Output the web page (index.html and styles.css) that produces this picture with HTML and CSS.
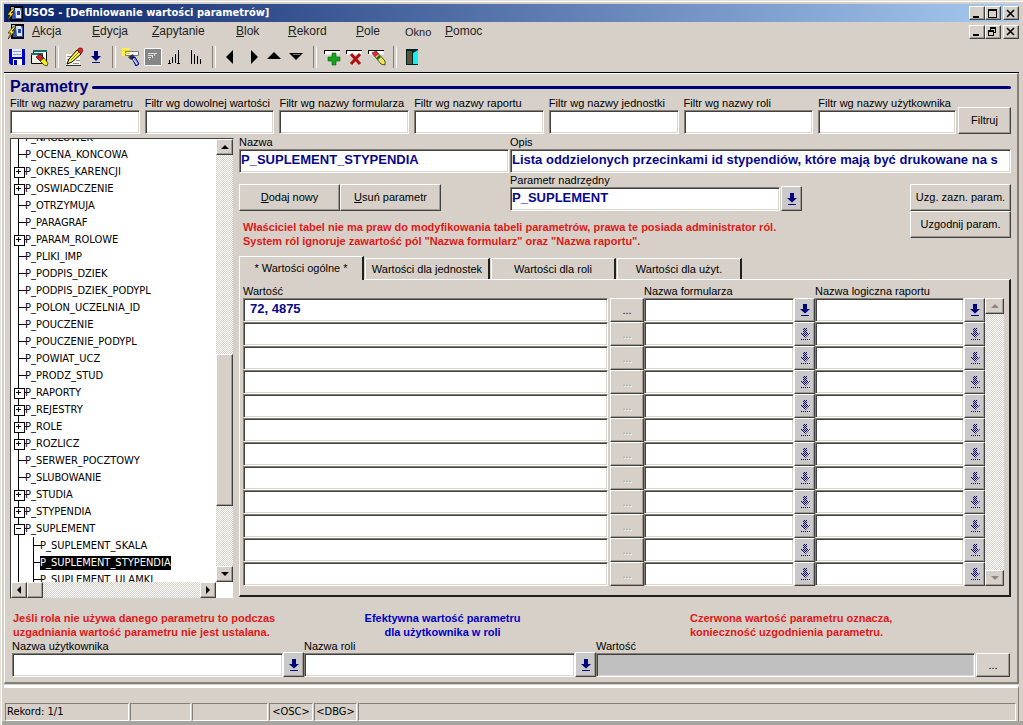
FILE: index.html
```html
<!DOCTYPE html>
<html lang="pl">
<head>
<meta charset="utf-8">
<title>USOS - [Definiowanie wartości parametrów]</title>
<link rel="stylesheet" href="styles.css">
</head>
<body>
<svg class="defs" aria-hidden="true">
  <defs>
    <pattern id="dither" width="2" height="2" patternUnits="userSpaceOnUse">
      <path d="M0 0h1v1H0zM1 1h1v1H1z" fill="#00007b"/>
    </pattern>
    <symbol id="lov" viewBox="0 0 10 12"><path d="M3 0h4v5h3L5 9.500 0 5h3zM1 11h8v1H1z" fill="#00007b"/></symbol>
    <symbol id="lov-off" viewBox="0 0 10 12"><path d="M3 0h4v5h3L5 10 0 5h3zM0 11h10v1H0z" fill="url(#dither)"/></symbol>
    <symbol id="app" viewBox="0 0 16 15">
      <path d="M3 0h13v15H3z" fill="#000"/><path d="M5 2h10v11H5z" fill="#2d4fb5"/>
      <path d="M8 2h5l1 3v7H9z" fill="#dfe8ff"/><path d="M10 5h3v4h-3z" fill="#2040c0"/>
      <path d="M4 1h3v3H4z" fill="#a9b7c9"/>
      <path d="M5 3L0 9h3l-3 6 7-8H4l4-4z" fill="#ffe600" stroke="#000" stroke-width=".6"/>
    </symbol>
    <symbol id="up" viewBox="0 0 8 4"><path d="M4 0l4 4H0z"/></symbol>
    <symbol id="down" viewBox="0 0 8 4"><path d="M0 0h8L4 4z"/></symbol>
    <symbol id="prev" viewBox="0 0 4 8"><path d="M4 0v8L0 4z"/></symbol>
    <symbol id="next" viewBox="0 0 4 8"><path d="M0 0v8l4-4z"/></symbol>
    <symbol id="min" viewBox="0 0 10 9"><path d="M1 7h6v2H1z"/></symbol>
    <symbol id="max" viewBox="0 0 10 9"><path d="M0 0h9v9H0zM1 2v6h7V2z" fill-rule="evenodd"/></symbol>
    <symbol id="restore" viewBox="0 0 10 9"><path d="M2 0h6v6H6V5h1V2H3v1H2zM0 3h6v6H0zM1 5v3h4V5z" fill-rule="evenodd"/></symbol>
    <symbol id="close" viewBox="0 0 10 9"><path d="M1 1l7 7M8 1L1 8" stroke="#000" stroke-width="1.600"/></symbol>
  </defs>
</svg>

<div class="window">
  <header>
    <div class="titlebar">
      <svg class="app-icon"><use href="#app"/></svg>
      <h1>USOS - [Definiowanie wartości parametrów]</h1>
      <div class="win-buttons">
        <button class="btn" aria-label="Minimalizuj"><svg><use href="#min"/></svg></button>
        <button class="btn" aria-label="Maksymalizuj"><svg><use href="#max"/></svg></button>
        <button class="btn close" aria-label="Zamknij"><svg><use href="#close"/></svg></button>
      </div>
    </div>
    <div class="menubar">
      <svg class="app-icon"><use href="#app"/></svg>
      <nav class="menu">
        <button><u>A</u>kcja</button>
        <button><u>E</u>dycja</button>
        <button><u>Z</u>apytanie</button>
        <button><u>B</u>lok</button>
        <button><u>R</u>ekord</button>
        <button><u>P</u>ole</button>
        <button class="small">Okno</button>
        <button><u>P</u>omoc</button>
      </nav>
      <div class="win-buttons">
        <button class="btn" aria-label="Minimalizuj okno"><svg><use href="#min"/></svg></button>
        <button class="btn" aria-label="Przywróć okno"><svg><use href="#restore"/></svg></button>
        <button class="btn close" aria-label="Zamknij okno"><svg><use href="#close"/></svg></button>
      </div>
    </div>
    <div class="toolbar">
      <button aria-label="Zapisz"><svg viewBox="0 0 20 20"><path d="M2 2h16v16H4l-2-2z" fill="#0000c0"/><path d="M5 2h10v8H5z" fill="#e8ecff"/><path d="M6 4h8v1H6zM6 7h8v1H6z" fill="#8c9be0"/><path d="M6 12h9v6H6z" fill="#fff"/><path d="M7 13h3v5H7z" fill="#0000c0"/></svg></button>
      <button aria-label="Wyczyść formularz"><svg viewBox="0 0 20 20"><path d="M4.500 3.500h13v11h-13z" fill="#fff" stroke="#000"/><path d="M4 3h14v2H4z" fill="#176b68"/><path d="M2.500 6.500h11v10h-11z" fill="#f3f1e8" stroke="#000"/><path d="M2 6h12v2H2z" fill="#176b68"/><path d="M7 10l4-3 4 4-4 3z" fill="#d32020" stroke="#000" stroke-width=".6"/><path d="M11 14l4-3 4 5-1 3-3-1z" fill="#f2ee20" stroke="#000" stroke-width=".6"/></svg></button>
      <span class="sep"></span>
      <button aria-label="Edytuj"><svg viewBox="0 0 20 20"><path d="M2 7h14v12H2z" fill="#f5f5f0"/><path d="M3 9.500h5M3 12.500h3M9 16.500h6M12 13.500h4" stroke="#8c8c8c"/><path d="M2 18h15v1H2z" fill="#333"/><path d="M5 12l8-9 4 4-9 8-5 2z" fill="#f6ed3a" stroke="#000"/><path d="M7 13l8-8" stroke="#7c8d18"/><path d="M13 3l2-2h3l1 3-2 3z" fill="#d8202c" stroke="#701010" stroke-width=".6"/></svg></button>
      <button aria-label="Lista wartości"><svg viewBox="0 0 20 20"><path d="M8 4h4v5h3l-5 5-5-5h3zM6 15h8v1H6z" fill="#00007b"/></svg></button>
      <span class="sep"></span>
      <button aria-label="Wprowadź zapytanie"><svg viewBox="0 0 20 20"><path d="M1 1h8v8H1z" fill="#fff04a"/><path d="M4.500 4.500h13v4h-13z" fill="#fff" stroke="#777"/><path d="M2 3.500h7M3 6.500h6" stroke="#f5d800"/><path d="M7 10l5-3 2 4-4 2z" fill="#333"/><path d="M11 11l3-1 4 7-3 2z" fill="#7d8ff0" stroke="#000080"/><path d="M12 12l4 5" stroke="#fff"/></svg></button>
      <button aria-label="Wykonaj zapytanie" disabled><svg viewBox="0 0 20 20"><path d="M1.500 1.500h17v17h-17z" fill="#868686" stroke="#fff"/><path d="M5 6h9v1H5zM5 8h5v1H5zM5 10h3v1H5zM11 7h1v2h-1zM9 9h1v2H9zM6 12h1v1H6z" fill="#ddd"/></svg></button>
      <button aria-label="Sortuj rosnąco"><svg viewBox="0 0 20 20"><path d="M4 13h1v3H4zM7 10h1v6H7zM10 7h1v9h-1zM13 3h1v13h-1zM3 16h3v1H3zM12 16h3v1h-3z"/></svg></button>
      <button aria-label="Sortuj malejąco"><svg viewBox="0 0 20 20"><path d="M4 3h1v14H4zM7 7h1v10H7zM10 9h1v8h-1zM13 12h1v5h-1z"/></svg></button>
      <span class="sep narrow"></span>
      <button aria-label="Poprzedni blok"><svg viewBox="0 0 20 20"><path d="M13 3v14L6 10z"/></svg></button>
      <button aria-label="Następny blok"><svg viewBox="0 0 20 20"><path d="M9 3v14l7-7z"/></svg></button>
      <button aria-label="Poprzedni rekord"><svg viewBox="0 0 20 20"><path d="M10 5l7 7H3z"/></svg></button>
      <button aria-label="Następny rekord"><svg viewBox="0 0 20 20"><path d="M3 6h14l-7 7z"/><path d="M7 7.500h7" stroke="#777"/></svg></button>
      <span class="sep wide"></span>
      <button aria-label="Wstaw rekord"><svg viewBox="0 0 20 20"><path d="M1.500 3.500h15v4h-15z" fill="#fff"/><path d="M1 3h16v1H1zM1 3h1v4H1z"/><path d="M9 6h4v4h4v4h-4v4H9v-4H5v-4h4z" fill="#16a41c" stroke="#0a5a10" stroke-width=".6"/></svg></button>
      <button aria-label="Usuń rekord"><svg viewBox="0 0 20 20"><path d="M1.500 3.500h15v4h-15z" fill="#fff"/><path d="M1 3h16v1H1zM1 3h1v4H1z"/><path d="M6 7l9 10M15 7L6 17" stroke="#b01010" stroke-width="3"/></svg></button>
      <button aria-label="Wyczyść rekord"><svg viewBox="0 0 20 20"><path d="M1.500 3.500h15v4h-15z" fill="#fff"/><path d="M1 3h16v1H1zM1 3h1v4H1z"/><path d="M5 6l4-2 9 10v4l-4-1z" fill="#f0e850" stroke="#111" stroke-width=".7"/><path d="M5 6l4-2 3 3-4 3z" fill="#d82838"/><path d="M9 11l3-3 2 2-3 3z" fill="#1d7430"/></svg></button>
      <span class="sep"></span>
      <button aria-label="Wyjście"><svg viewBox="0 0 20 20"><path d="M4 2h12v16H4z" fill="#001f1f"/><path d="M5 4h5v13H5z" fill="#3c6434"/><path d="M5 6h2v2H5zM8 8h2v2H8zM5 10h2v2H5zM8 12h2v2H8zM5 14h2v2H5z" fill="#7a3e30"/><path d="M11 6l5-3v14h-5z" fill="#16eef0"/></svg></button>
    </div>
  </header>

  <main class="canvas">
    <h2 class="legend">Parametry</h2>

    <form class="filters">
      <label>Filtr wg nazwy parametru<input class="field"></label>
      <label>Filtr wg dowolnej wartości<input class="field"></label>
      <label>Filtr wg nazwy formularza<input class="field"></label>
      <label>Filtr wg nazwy raportu<input class="field"></label>
      <label>Filtr wg nazwy jednostki<input class="field"></label>
      <label>Filtr wg nazwy roli<input class="field"></label>
      <label>Filtr wg nazwy użytkownika<input class="field"></label>
      <button class="btn" type="button">Filtruj</button>
    </form>

    <div class="columns">
      <section class="tree" aria-label="Drzewo parametrów">
        <div class="tree-view">
          <ul>
            <li>P_NAGLOWEK</li>
            <li>P_OCENA_KONCOWA</li>
            <li class="closed">P_OKRES_KARENCJI</li>
            <li class="closed">P_OSWIADCZENIE</li>
            <li>P_OTRZYMUJA</li>
            <li>P_PARAGRAF</li>
            <li class="closed">P_PARAM_ROLOWE</li>
            <li>P_PLIKI_IMP</li>
            <li>P_PODPIS_DZIEK</li>
            <li>P_PODPIS_DZIEK_PODYPL</li>
            <li>P_POLON_UCZELNIA_ID</li>
            <li>P_POUCZENIE</li>
            <li>P_POUCZENIE_PODYPL</li>
            <li>P_POWIAT_UCZ</li>
            <li>P_PRODZ_STUD</li>
            <li class="closed">P_RAPORTY</li>
            <li class="closed">P_REJESTRY</li>
            <li class="closed">P_ROLE</li>
            <li class="closed">P_ROZLICZ</li>
            <li>P_SERWER_POCZTOWY</li>
            <li>P_SLUBOWANIE</li>
            <li class="closed">P_STUDIA</li>
            <li class="closed">P_STYPENDIA</li>
            <li class="open">P_SUPLEMENT
              <ul>
                <li>P_SUPLEMENT_SKALA</li>
                <li><mark>P_SUPLEMENT_STYPENDIA</mark></li>
                <li>P_SUPLEMENT_ULAMKI</li>
              </ul>
            </li>
          </ul>
        </div>
        <div class="scroll vertical">
          <button class="btn" aria-label="W górę"><svg class="h-arrow"><use href="#up"/></svg></button>
          <span class="gap-before"></span><span class="btn thumb"></span><span class="gap-after"></span>
          <button class="btn" aria-label="W dół"><svg class="h-arrow"><use href="#down"/></svg></button>
        </div>
        <div class="scroll horizontal">
          <button class="btn" aria-label="W lewo"><svg class="v-arrow"><use href="#prev"/></svg></button>
          <span class="btn thumb"></span><span class="gap-after"></span>
          <button class="btn" aria-label="W prawo"><svg class="v-arrow"><use href="#next"/></svg></button>
        </div>
      </section>

      <section class="details">
        <div class="names">
          <label>Nazwa<input class="field value" value="P_SUPLEMENT_STYPENDIA"></label>
          <label>Opis<input class="field value" value="Lista oddzielonych przecinkami id stypendiów, które mają być drukowane na s"></label>
        </div>
        <div class="edit">
          <div class="edit-main">
            <div class="parent-row">
              <div class="commands">
                <button class="btn"><span><u>D</u>odaj nowy</span></button>
                <button class="btn"><span><u>U</u>suń parametr</span></button>
              </div>
              <label>Parametr nadrzędny<input class="field value" value="P_SUPLEMENT"></label>
              <button class="btn lov" aria-label="Lista parametrów"><svg><use href="#lov"/></svg></button>
            </div>
            <p class="note red">Właściciel tabel nie ma praw do modyfikowania tabeli parametrów, prawa te posiada administrator ról.<br>System ról ignoruje zawartość pól "Nazwa formularz" oraz "Nazwa raportu".</p>
          </div>
          <div class="agree">
            <button class="btn">Uzg. zazn. param.</button>
            <button class="btn">Uzgodnij param.</button>
          </div>
        </div>

        <div class="tabs" role="tablist">
          <button class="tab active" role="tab" aria-selected="true">* Wartości ogólne *</button>
          <button class="tab" role="tab">Wartości dla jednostek</button>
          <button class="tab" role="tab">Wartości dla roli</button>
          <button class="tab" role="tab">Wartości dla użyt.</button>
        </div>
        <div class="tab-panel">
          <div class="records">
            <div class="record heads"><span>Wartość</span><span>Nazwa formularza</span><span>Nazwa logiczna raportu</span></div>
            <div class="record"><input class="field value first" value="72, 4875" aria-label="Wartość 1"><button class="btn more">...</button><input class="field" aria-label="Formularz 1"><button class="btn lov" aria-label="Lista formularzy 1"><svg><use href="#lov"/></svg></button><input class="field" aria-label="Raport 1"><button class="btn lov" aria-label="Lista raportów 1"><svg><use href="#lov"/></svg></button></div>
            <div class="record"><input class="field" aria-label="Wartość 2"><button class="btn more" disabled>...</button><input class="field" aria-label="Formularz 2"><button class="btn lov" aria-label="Lista formularzy 2" disabled><svg><use href="#lov-off"/></svg></button><input class="field" aria-label="Raport 2"><button class="btn lov" aria-label="Lista raportów 2" disabled><svg><use href="#lov-off"/></svg></button></div>
            <div class="record"><input class="field" aria-label="Wartość 3"><button class="btn more" disabled>...</button><input class="field" aria-label="Formularz 3"><button class="btn lov" aria-label="Lista formularzy 3" disabled><svg><use href="#lov-off"/></svg></button><input class="field" aria-label="Raport 3"><button class="btn lov" aria-label="Lista raportów 3" disabled><svg><use href="#lov-off"/></svg></button></div>
            <div class="record"><input class="field" aria-label="Wartość 4"><button class="btn more" disabled>...</button><input class="field" aria-label="Formularz 4"><button class="btn lov" aria-label="Lista formularzy 4" disabled><svg><use href="#lov-off"/></svg></button><input class="field" aria-label="Raport 4"><button class="btn lov" aria-label="Lista raportów 4" disabled><svg><use href="#lov-off"/></svg></button></div>
            <div class="record"><input class="field" aria-label="Wartość 5"><button class="btn more" disabled>...</button><input class="field" aria-label="Formularz 5"><button class="btn lov" aria-label="Lista formularzy 5" disabled><svg><use href="#lov-off"/></svg></button><input class="field" aria-label="Raport 5"><button class="btn lov" aria-label="Lista raportów 5" disabled><svg><use href="#lov-off"/></svg></button></div>
            <div class="record"><input class="field" aria-label="Wartość 6"><button class="btn more" disabled>...</button><input class="field" aria-label="Formularz 6"><button class="btn lov" aria-label="Lista formularzy 6" disabled><svg><use href="#lov-off"/></svg></button><input class="field" aria-label="Raport 6"><button class="btn lov" aria-label="Lista raportów 6" disabled><svg><use href="#lov-off"/></svg></button></div>
            <div class="record"><input class="field" aria-label="Wartość 7"><button class="btn more" disabled>...</button><input class="field" aria-label="Formularz 7"><button class="btn lov" aria-label="Lista formularzy 7" disabled><svg><use href="#lov-off"/></svg></button><input class="field" aria-label="Raport 7"><button class="btn lov" aria-label="Lista raportów 7" disabled><svg><use href="#lov-off"/></svg></button></div>
            <div class="record"><input class="field" aria-label="Wartość 8"><button class="btn more" disabled>...</button><input class="field" aria-label="Formularz 8"><button class="btn lov" aria-label="Lista formularzy 8" disabled><svg><use href="#lov-off"/></svg></button><input class="field" aria-label="Raport 8"><button class="btn lov" aria-label="Lista raportów 8" disabled><svg><use href="#lov-off"/></svg></button></div>
            <div class="record"><input class="field" aria-label="Wartość 9"><button class="btn more" disabled>...</button><input class="field" aria-label="Formularz 9"><button class="btn lov" aria-label="Lista formularzy 9" disabled><svg><use href="#lov-off"/></svg></button><input class="field" aria-label="Raport 9"><button class="btn lov" aria-label="Lista raportów 9" disabled><svg><use href="#lov-off"/></svg></button></div>
            <div class="record"><input class="field" aria-label="Wartość 10"><button class="btn more" disabled>...</button><input class="field" aria-label="Formularz 10"><button class="btn lov" aria-label="Lista formularzy 10" disabled><svg><use href="#lov-off"/></svg></button><input class="field" aria-label="Raport 10"><button class="btn lov" aria-label="Lista raportów 10" disabled><svg><use href="#lov-off"/></svg></button></div>
            <div class="record"><input class="field" aria-label="Wartość 11"><button class="btn more" disabled>...</button><input class="field" aria-label="Formularz 11"><button class="btn lov" aria-label="Lista formularzy 11" disabled><svg><use href="#lov-off"/></svg></button><input class="field" aria-label="Raport 11"><button class="btn lov" aria-label="Lista raportów 11" disabled><svg><use href="#lov-off"/></svg></button></div>
            <div class="record"><input class="field" aria-label="Wartość 12"><button class="btn more" disabled>...</button><input class="field" aria-label="Formularz 12"><button class="btn lov" aria-label="Lista formularzy 12" disabled><svg><use href="#lov-off"/></svg></button><input class="field" aria-label="Raport 12"><button class="btn lov" aria-label="Lista raportów 12" disabled><svg><use href="#lov-off"/></svg></button></div>
          </div>
          <div class="scroll vertical off">
            <button class="btn" aria-label="Poprzednie wartości" disabled><svg class="h-arrow"><use href="#up"/></svg></button>
            <span class="gap-after"></span>
            <button class="btn" aria-label="Następne wartości" disabled><svg class="h-arrow"><use href="#down"/></svg></button>
          </div>
        </div>
      </section>
    </div>

    <div class="effective">
      <p class="note red">Jeśli rola nie używa danego parametru to podczas<br>uzgadniania wartość parametru nie jest ustalana.</p>
      <p class="note blue">Efektywna wartość parametru<br>dla użytkownika w roli</p>
      <p class="note red last">Czerwona wartość parametru oznacza,<br>konieczność uzgodnienia parametru.</p>
      <div class="pick">
        <label>Nazwa użytkownika<input class="field"></label>
        <button class="btn lov" aria-label="Lista użytkowników"><svg><use href="#lov"/></svg></button>
      </div>
      <div class="pick">
        <label>Nazwa roli<input class="field"></label>
        <button class="btn lov" aria-label="Lista ról"><svg><use href="#lov"/></svg></button>
      </div>
      <div class="pick">
        <label>Wartość<input class="field readonly" readonly></label>
        <button class="btn more">...</button>
      </div>
    </div>
  </main>

  <footer class="status">
    <span>Rekord: 1/1</span><span></span><span></span><span class="flag">&lt;OSC&gt;</span><span class="flag">&lt;DBG&gt;</span><span></span>
  </footer>
</div>
</body>
</html>
```
FILE: styles.css
```css
:root {
  --face: #d6d0c8;
  --shade: #848078;
  --dark: #404040;
  --navy: #00007b;
  --ui: "Liberation Sans", Arial, sans-serif;
  --tahoma: "DejaVu Sans Condensed", Tahoma, sans-serif;
}

* { box-sizing: border-box; }

body {
  margin: 0;
  background: var(--face);
  color: #000;
  font: 11px/13px var(--ui);
}

.defs { position: absolute; width: 0; height: 0; }

h1, h2, p, ul { margin: 0; padding: 0; }
button, input { font: inherit; color: inherit; }
button { padding: 0; border: 0; background: none; }
svg { display: block; }

.window {
  display: flex;
  flex-direction: column;
  min-height: 100vh;
  padding: 4px;
  box-shadow: inset 1px 1px #e4e0d8, inset 2px 2px #fff, inset 0 -4px #a8a49e;
}

/* shared controls */
.btn {
  display: flex;
  align-items: center;
  justify-content: center;
  border: 1px solid;
  border-color: #fff var(--dark) var(--dark) #fff;
  background: var(--face);
  box-shadow: inset -1px -1px #a09c94;
}

.field {
  display: block;
  width: 100%;
  min-width: 0;
  height: 24px;
  margin: 0;
  padding: 0 2px 3px 1px;
  border: 1px solid;
  border-color: var(--shade) #fff #fff var(--shade);
  border-radius: 0;
  outline: 0;
  background: #fff;
  box-shadow: inset 1px 1px var(--dark), inset -1px -1px #dcd8d0;
}

.field.value { color: #08088c; font-weight: bold; font-size: 13px; }
.field.first { padding-left: 6px; }
.field.readonly { background: #c0c0c0; }

.lov { width: 21px; height: 25px; flex: none; background: #cac8c8; }
.lov svg { width: 10px; height: 12px; }
.more { width: 34px; height: 24px; flex: none; }
.more:disabled { color: #999; text-shadow: 1px 1px #fff; }

.note { font-weight: bold; line-height: 14px; }
.red { color: #e01818; }
.blue { color: #0000c4; text-align: center; }

/* header */
.titlebar {
  display: flex;
  align-items: center;
  height: 18px;
  padding-left: 3px;
  background: linear-gradient(to right, #0a246a, #a6caf0);
}
.titlebar h1 { flex: 1; margin-left: 1px; color: #fff; font: bold 11px/16px var(--tahoma); }
.app-icon { width: 16px; height: 15px; flex: none; }

.win-buttons { display: flex; }
.win-buttons .btn { width: 16px; height: 14px; }
.win-buttons .close { margin-left: 2px; }
.win-buttons svg { width: 10px; height: 9px; }

.menubar { display: flex; align-items: center; height: 19px; padding-left: 4px; }
.menu {
  flex: 1;
  display: grid;
  grid-template-columns: 60px 60px 84px 52px 68px 49px 40px auto;
  margin-left: 8px;
  font-size: 12px;
  line-height: 16px;
  color: #222;
}
.menu button { text-align: left; padding-bottom: 2px; }
.menu .small { font-size: 11px; padding: 0; }

.toolbar { display: flex; align-items: center; height: 32px; padding: 0 2px; border-bottom: 1px solid #000; }
.toolbar button { width: 22px; height: 22px; padding: 1px; }
.toolbar svg { width: 20px; height: 20px; }
.sep { width: 13px; height: 22px; display: flex; justify-content: center; }
.sep::before { content: ""; width: 2px; border-left: 1px solid var(--shade); border-right: 1px solid #fff; }
.narrow { width: 11px; }
.wide { width: 15px; }

/* canvas */
.canvas {
  padding: 4px 6px 5px 5px;
  border: 1px solid;
  border-color: #fff var(--shade) var(--shade) #fff;
  border-right-width: 2px;
  border-bottom-width: 2px;
}

.legend {
  display: flex;
  align-items: center;
  color: var(--navy);
  font-size: 16px;
  line-height: 17px;
  padding-bottom: 2px;
}
.legend::after { content: ""; flex: 1; height: 3px; margin: 2px 0 0 4px; border-radius: 2px; background: var(--navy); }

label { display: block; min-width: 0; white-space: nowrap; }

.filters {
  display: grid;
  grid-template-columns: repeat(6, 130fr) 138fr 50px;
  column-gap: 5px;
  align-items: end;
}
.filters .btn { height: 27px; margin-left: -3px; }

.columns { display: grid; grid-template-columns: 224px 1fr; gap: 5px; padding-top: 2px; }

/* parameter tree */
.tree {
  display: grid;
  grid-template: 443px 16px / 1fr 17px;
  margin-top: 2px;
  align-self: start;
  border: 1px solid;
  border-color: var(--dark) var(--face) var(--face) var(--dark);
  background: #fff;
}
.tree-view { overflow: hidden; }
.tree-view > ul { margin: -10px 0 0 7px; }
.tree ul { list-style: none; font: 11px/17px var(--tahoma); }
.tree li {
  position: relative;
  padding-left: 7px;
  white-space: nowrap;
  background:
    linear-gradient(#000, #000) 0 0 / 1px 100% no-repeat,
    linear-gradient(#000, #000) 0 8px / 8px 1px no-repeat;
}
.closed::before, .open::before {
  content: "";
  position: absolute;
  left: -4px;
  top: 4px;
  width: 9px;
  height: 9px;
  border: 1px solid #000;
  background:
    linear-gradient(#000, #000) 1px 3px / 5px 1px no-repeat,
    linear-gradient(#000, #000) 3px 1px / 1px 5px no-repeat,
    #fff;
}
.open::before { background: linear-gradient(#000, #000) 1px 3px / 5px 1px no-repeat, #fff; }
.open ul { margin-left: 8px; }
.tree mark { display: inline-block; height: 14px; line-height: 14px; background: #000; color: #fff; }

.scroll {
  display: flex;
  background: repeating-conic-gradient(#fff 0 25%, var(--face) 0 50%) 0 0 / 2px 2px;
}
.vertical { flex-direction: column; }
.vertical .btn { height: 16px; }
.vertical .gap-before { flex: 200; }
.vertical .thumb { flex: 151; }
.vertical .gap-after { flex: 60; }
.horizontal .btn { width: 16px; }
.horizontal .gap-after { flex: 1; }
.h-arrow { width: 8px; height: 4px; }
.v-arrow { width: 4px; height: 8px; }
.off svg { fill: #8c8880; }

/* details */
.names { display: grid; grid-template-columns: 270px 1fr; gap: 1px; }
.edit { display: flex; }
.edit-main { flex: 1; }
.parent-row { display: flex; align-items: end; padding-top: 1px; }
.parent-row label { width: 270px; }
.parent-row .lov { margin-left: 1px; }
.commands { display: flex; width: 271px; }
.commands .btn { width: 101px; height: 27px; }
.edit-main .note { padding: 9px 0 0 4px; }
.agree { width: 101px; padding-top: 11px; }
.agree .btn { width: 100%; height: 27px; white-space: nowrap; }

.tabs { display: flex; align-items: end; gap: 1px; padding-top: 8px; }
.tab {
  width: 125px;
  height: 21px;
  border: solid #fff;
  border-width: 1px 0 0 1px;
  border-right: 2px solid #202020;
}
.tab.active { height: 24px; margin-bottom: -1px; padding-bottom: 1px; background: var(--face); z-index: 1; }

.tab-panel {
  display: flex;
  padding: 5px 5px 9px 3px;
  border: 1px solid;
  border-color: #fff #202020 #202020 #fff;
  border-right-width: 2px;
  border-bottom-width: 2px;
}
.records { flex: 1; }
.record { display: grid; grid-template-columns: 1fr 36px 150px 21px 149px 21px; }
.record .more { margin-left: 2px; }
.record .lov { height: 24px; }
.heads span:nth-child(2) { grid-column: 3; }
.heads span:nth-child(3) { grid-column: 5; }
.tab-panel .scroll { width: 19px; margin-top: 13px; }

/* effective value */
.effective {
  display: grid;
  grid-template-columns: 292px 292px 1fr;
  padding: 12px 1px 0 2px;
}
.effective .note { padding: 0 0 1px 1px; }
.effective .blue { padding-right: 16px; }
.effective .last { padding-left: 94px; }
.pick { display: flex; align-items: end; min-width: 0; }
.pick label { flex: 1; }
.pick .more { margin-left: 1px; }

/* status */
.status {
  display: grid;
  grid-template-columns: 124px 61px 76px 44px 43px 1fr;
  gap: 1px;
  flex: 1;
  align-items: end;
  padding: 14px 2px 0 1px;
  margin-top: 1px;
  border-top: 3px solid #fff;
  border-right: 1px solid var(--shade);
  font: 11px/16px var(--tahoma);
}
.status span {
  height: 18px;
  padding-left: 1px;
  border: 1px solid;
  border-color: var(--shade) #fff #fff var(--shade);
}
.status .flag { text-align: center; padding: 0; }
```
